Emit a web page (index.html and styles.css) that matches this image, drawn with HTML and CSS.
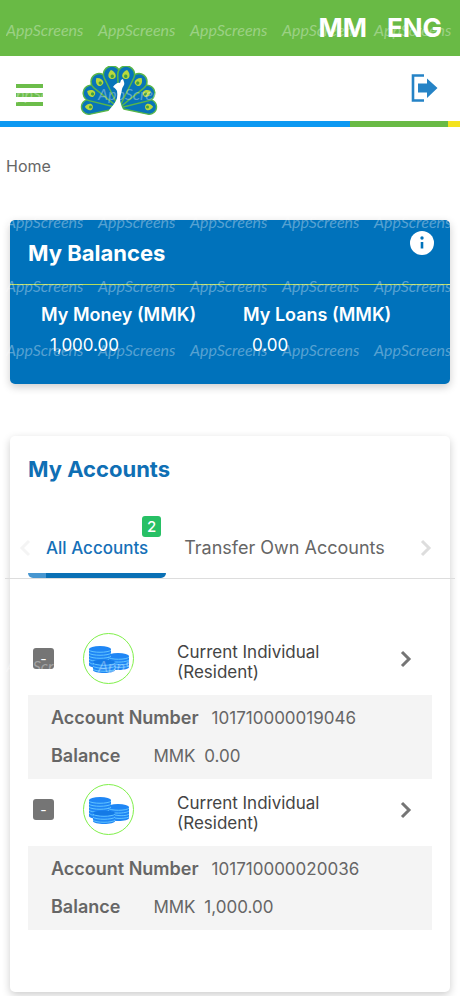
FILE: index.html
```html
<!DOCTYPE html>
<html lang="en">
	<head>
		<meta charset="utf-8">
		<meta name="viewport" content="width=device-width, initial-scale=1">
		<title>My Accounts</title>
		<link rel="stylesheet" href="styles.css">
	</head>
	<body>
		<!--Shared icons-->
		<svg class="icon_defs" width="0" height="0" aria-hidden="true">
			<symbol id="icon_coins" viewBox="0 0 42 28">
				<g fill="#1f86f5">
					<path d="M1 4v16c0 4 22 4 22 0V4z"/>
					<ellipse cx="12" cy="4" rx="11" ry="3"/>
					<path d="M20 11v11c0 4 21 4 21 0v-11z"/>
					<ellipse cx="30" cy="11" rx="11" ry="3"/>
					<path d="M5 17v8c0 4 22 4 22 0v-8z"/>
				</g>
				<g fill="none" stroke="#62c4ff">
					<path d="M1 5c2 3 20 3 22 0M1 8c2 3 20 3 22 0M1 11c2 3 20 3 22 0M1 14c2 3 18 3 20 0M1 17c2 2 3 2 5 2"/>
					<path d="M20 12c2 3 19 3 21 0M23 16c5 2 16 1 18-1M27 19c5 1 12 1 14-1M27 22c5 1 12 0 14-1"/>
					<path d="M5 18c2 3 20 3 22 0M5 21c2 3 20 3 22 0M5 24c2 3 20 3 22 0"/>
				</g>
				<ellipse cx="16" cy="17" rx="11" ry="2.5" fill="#147ae6"/>
			</symbol>
			<symbol id="icon_next" viewBox="0 0 12 18">
				<path d="M2 2l7 7-7 7" fill="none" stroke="currentColor" stroke-width="3"/>
			</symbol>
			<symbol id="feather" viewBox="-10 -42 20 42" overflow="visible">
				<path d="M0 0L-7.6-30A7.8 7.8 0 1 1 7.6-30Z" fill="#0874b8" stroke="#58b64a" stroke-width="1.4"/>
				<path d="M0-36c3 2 4 5 3 7s-5 2-6 0 0-5 3-7z" fill="#b9d93c"/>
				<circle cx="0" cy="-30" r="1.6" fill="#3f9f45"/>
			</symbol>
		</svg>

		<div class="top_bar">
			<a href="#">MM</a>
			<a href="#">ENG</a>
		</div>

		<header class="header">
			<button type="button" class="menu_button" aria-label="Menu">
				<span></span>
				<span></span>
				<span></span>
			</button>
			<a href="#" class="logo" aria-label="Home page">
				<svg width="78" height="50" viewBox="0 0 78 50">
					<g transform="translate(39 42)">
						<use href="#feather" x="-10" y="-42" width="20" height="42" transform="rotate(-88) scale(0.95)"/>
						<use href="#feather" x="-10" y="-42" width="20" height="42" transform="rotate(88) scale(0.95)"/>
						<use href="#feather" x="-10" y="-42" width="20" height="42" transform="rotate(-62)"/>
						<use href="#feather" x="-10" y="-42" width="20" height="42" transform="rotate(62)"/>
						<use href="#feather" x="-10" y="-42" width="20" height="42" transform="rotate(-37) scale(1.04)"/>
						<use href="#feather" x="-10" y="-42" width="20" height="42" transform="rotate(37) scale(1.04)"/>
						<use href="#feather" x="-10" y="-42" width="20" height="42" transform="rotate(-12) scale(1.08)"/>
						<use href="#feather" x="-10" y="-42" width="20" height="42" transform="rotate(12) scale(1.08)"/>
					</g>
					<path d="M27 50c1-6 4-8 7-12 3-4 4-8 3-13-1-2-2-3-4-4 2-3 5-5 7-4l1-3 2-1 1 3c1 3-1 4-2 7-1 7-3 9-1 15 1 5 4 7 6 12z" fill="#fff"/>
				</svg>
			</a>
			<button type="button" class="logout_button" aria-label="Log out">
				<svg width="27" height="28" viewBox="0 0 27 28">
					<path d="M13 1.5H2v25h11" fill="none" stroke="#2583c6" stroke-width="2.6"/>
					<path d="M7 9.500h9V4.500L26.500 14 16 24v-5.500H7z" fill="#2583c6"/>
				</svg>
			</button>
		</header>
		<div class="stripe">
			<span class="stripe_blue"></span>
			<span class="stripe_green"></span>
			<span class="stripe_yellow"></span>
		</div>

		<nav class="breadcrumb" aria-label="Breadcrumb">
			<a href="#">Home</a>
		</nav>

		<main class="content">
			<section class="card balances">
				<div class="balances_head">
					<h1>My Balances</h1>
					<button type="button" class="info_button" aria-label="Information">
						<svg width="24" height="24" viewBox="0 0 24 24">
							<circle cx="12" cy="12" r="12" fill="#fff"/>
							<circle cx="12" cy="7" r="1.7" fill="#0072bb"/>
							<path d="M12 11v6.5" stroke="#0072bb" stroke-width="2.6"/>
						</svg>
					</button>
				</div>
				<dl class="balances_list">
					<div>
						<dt>My Money (MMK)</dt>
						<dd>1,000.00</dd>
					</div>
					<div>
						<dt>My Loans (MMK)</dt>
						<dd>0.00</dd>
					</div>
				</dl>
			</section>

			<section class="card accounts">
				<h2>My Accounts</h2>

				<div class="tabs">
					<button type="button" class="tab_arrow tab_prev" aria-label="Previous">
						<svg width="12" height="18"><use href="#icon_next"/></svg>
					</button>
					<div class="tab_list" role="tablist">
						<button type="button" class="tab tab_active" role="tab" aria-selected="true">All Accounts<span class="badge">2</span></button>
						<button type="button" class="tab" role="tab" aria-selected="false">Transfer Own Accounts</button>
					</div>
					<button type="button" class="tab_arrow" aria-label="Next">
						<svg width="12" height="18"><use href="#icon_next"/></svg>
					</button>
				</div>

				<div class="account">
					<div class="account_head">
						<button type="button" class="toggle" aria-label="Collapse">-</button>
						<span class="account_icon"><svg width="42" height="28"><use href="#icon_coins"/></svg></span>
						<h3>Current Individual (Resident)</h3>
						<a href="#" class="account_link" aria-label="Account details">
							<svg width="12" height="18"><use href="#icon_next"/></svg>
						</a>
					</div>
					<dl class="account_details">
						<div class="number_row">
							<dt>Account Number</dt>
							<dd>101710000019046</dd>
						</div>
						<div class="balance_row">
							<dt>Balance</dt>
							<dd><span>MMK</span> <span>0.00</span></dd>
						</div>
					</dl>
				</div>

				<div class="account">
					<div class="account_head">
						<button type="button" class="toggle" aria-label="Collapse">-</button>
						<span class="account_icon"><svg width="42" height="28"><use href="#icon_coins"/></svg></span>
						<h3>Current Individual (Resident)</h3>
						<a href="#" class="account_link" aria-label="Account details">
							<svg width="12" height="18"><use href="#icon_next"/></svg>
						</a>
					</div>
					<dl class="account_details">
						<div class="number_row">
							<dt>Account Number</dt>
							<dd>101710000020036</dd>
						</div>
						<div class="balance_row">
							<dt>Balance</dt>
							<dd><span>MMK</span> <span>1,000.00</span></dd>
						</div>
					</dl>
				</div>
			</section>
		</main>

		<!--Watermark, only visible on the coloured areas-->
		<div class="watermark" aria-hidden="true">
			<div class="mark_row"><span>AppScreens</span><span>AppScreens</span><span>AppScreens</span><span>AppScreens</span><span>AppScreens</span></div>
			<div class="mark_row"><span>AppScreens</span><span>AppScreens</span></div>
			<div class="mark_row"></div>
			<div class="mark_row mark_clip"><span>AppScreens</span><span>AppScreens</span><span>AppScreens</span><span>AppScreens</span><span>AppScreens</span></div>
			<div class="mark_row mark_clip"><span>AppScreens</span><span>AppScreens</span><span>AppScreens</span><span>AppScreens</span><span>AppScreens</span></div>
			<div class="mark_row mark_clip"><span>AppScreens</span><span>AppScreens</span><span>AppScreens</span><span>AppScreens</span><span>AppScreens</span></div>
			<div class="mark_gap"></div>
			<div class="mark_row"><span>AppScreens</span><span>AppScreens</span></div>
		</div>
	</body>
</html>
```

FILE: styles.css
```css
*{
	margin:0;
	padding:0;
	box-sizing:border-box;
}

body{
	position:relative;
	font-family:Inter, "Open Sans", sans-serif;
	font-size:16px;
	color:#666;
	background-color:#FFF;
	overflow-x:hidden;
}

button{
	border:0;
	background:none;
	font-family:inherit;
	cursor:pointer;
}

a{
	color:inherit;
	text-decoration:none;
}

svg{
	display:block;
}

.icon_defs{
	position:absolute;
}

.top_bar{
	display:flex;
	justify-content:flex-end;
	align-items:center;
	gap:20px;
	height:56px;
	padding:0 18px 2px;
	background-color:#69BA45;
	color:#FFF;
	font-size:26px;
	font-weight:bold;
}

.header{
	display:flex;
	align-items:center;
	height:65px;
	padding:4px 22px 0 16px;
}

.menu_button{
	display:flex;
	flex-direction:column;
	gap:5px;
	margin-top:8px;
}

.menu_button span{
	width:27px;
	height:4px;
	background-color:#6CBD4A;
}

.logo{
	margin-left:37px;
}

.logout_button{
	margin-left:auto;
	margin-bottom:6px;
}

.stripe{
	display:flex;
	height:6px;
}

.stripe_blue{
	flex:350;
	background-color:#0D99F2;
}

.stripe_green{
	flex:98;
	background-color:#69BA45;
}

.stripe_yellow{
	flex:12;
	background-color:#F3E31F;
}

.breadcrumb{
	padding:28px 6px;
	line-height:22px;
}

.content{
	padding:15px 10px 5px;
}

.card{
	border-radius:5px;
	box-shadow:0 3px 8px rgba(0,0,0,0.2);
}

.balances{
	height:164px;
	margin-bottom:52px;
	background-color:#0072BB;
	color:#FFF;
}

.balances_head{
	display:flex;
	justify-content:space-between;
	align-items:flex-start;
	height:65px;
	padding:11px 16px 0 18px;
	border-bottom:1px solid #B5DB5C;
}

h1,
h2{
	font-size:22px;
	font-weight:bold;
	line-height:28px;
}

h1{
	padding-top:8px;
}

.balances_list{
	display:grid;
	grid-template-columns:202px 1fr;
	padding:16px 0 0 31px;
}

.balances_list dt{
	font-size:18px;
	font-weight:600;
	line-height:28px;
}

.balances_list dd{
	padding-left:9px;
	font-size:17px;
	line-height:32px;
}

.accounts{
	padding:19px 18px 62px;
}

h2{
	color:#0F6FB4;
}

.tabs{
	display:flex;
	align-items:center;
	height:62px;
	margin:34px -23px 49px;
	padding:0 23px 0 14px;
	border-bottom:1px solid #DDD;
}

.tab_list{
	display:flex;
	flex:1;
	align-self:stretch;
}

.tab{
	position:relative;
	padding:0 18px;
	color:#666;
	font-size:18px;
	white-space:nowrap;
}

.tab_active{
	margin-left:-3px;
	color:#1570B8;
	font-size:17px;
	font-weight:500;
}

/* indicator under the selected tab */
.tab_active::after{
	content:"";
	position:absolute;
	left:0;
	right:0;
	bottom:0;
	height:5px;
	border-radius:0 0 5px 5px;
	background:linear-gradient(to right, #4796D0 18px, #0A70B5 18px);
}

.tab_arrow{
	color:#DDD;
}

.tab_prev{
	color:#F4F4F4;
	transform:rotate(180deg);
}

.badge{
	position:absolute;
	top:-1px;
	right:5px;
	width:19px;
	border-radius:3px;
	background-color:#27C065;
	color:#FFF;
	font-size:15px;
	line-height:21px;
	text-align:center;
}

.account_head{
	display:flex;
	align-items:center;
	padding:5px 20px 11px 5px;
}

.toggle{
	width:21px;
	height:21px;
	border-radius:3px;
	background-color:#757575;
	color:#FFF;
	font-size:14px;
	line-height:18px;
}

.account_icon{
	display:flex;
	justify-content:center;
	align-items:center;
	width:51px;
	height:51px;
	margin:0 43px 0 29px;
	border:1px solid #80F04A;
	border-radius:50%;
}

h3{
	flex:1;
	padding:6px 50px 0 0;
	color:#444;
	font-size:17px;
	font-weight:normal;
	line-height:20px;
}

.account_link{
	color:#757575;
}

.account_details{
	padding:4px 23px;
	background-color:#F4F4F4;
	font-size:17px;
	line-height:38px;
}

.number_row,
.balance_row{
	display:flex;
	gap:13px;
}

.balance_row{
	gap:33px;
}

.account_details dt{
	font-size:18px;
	font-weight:600;
}

.account_details dd span + span{
	padding-left:4px;
}

.watermark{
	position:absolute;
	top:19px;
	left:6px;
	right:0;
	overflow:hidden;
	color:rgba(255,255,255,0.35);
	font-family:Lato, sans-serif;
	font-size:16px;
	font-style:italic;
	line-height:22px;
	pointer-events:none;
}

.mark_row{
	display:grid;
	grid-template-columns:repeat(5, 92px);
	height:64px;
}

/* keeps the text inside the balances card */
.mark_clip{
	margin-right:10px;
	overflow:hidden;
}

.mark_gap{
	height:252px;
}
```
